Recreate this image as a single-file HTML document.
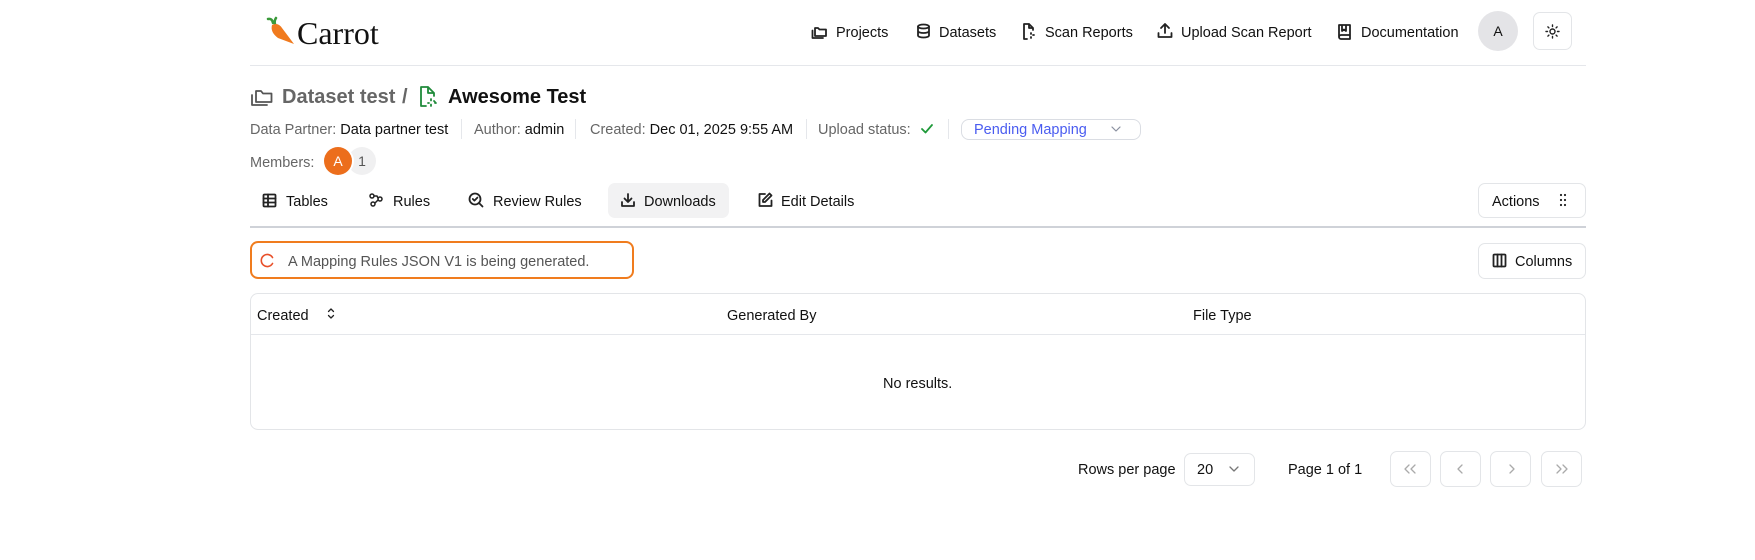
<!DOCTYPE html>
<html><head><meta charset="utf-8"><style>
*{box-sizing:border-box;margin:0;padding:0}
body{width:1755px;height:560px;background:#fff;font-family:"Liberation Sans",sans-serif;color:#111;position:relative;overflow:hidden;font-size:14.5px}
.a{position:absolute;white-space:nowrap;margin-top:2px}
.b{margin-top:0}
svg{position:absolute;fill:none;stroke:#222;stroke-width:1.8;stroke-linecap:round;stroke-linejoin:round}
.btn{position:absolute;border:1px solid #e3e5e8;border-radius:7px;background:#fff}
.g{color:#666}
.sep{position:absolute;width:1px;height:20px;background:#e5e7eb;top:119px}
</style></head><body>
<!-- logo -->
<svg style="left:264px;top:16px" width="32" height="30" viewBox="0 0 32 30"><path d="M4 3 Q8 2 9 7" stroke="#3a9a3a" stroke-width="2.5"/><path d="M12 2 Q10 5 11 8" stroke="#3a9a3a" stroke-width="2.5"/><path d="M8 9 Q14 6 18 12 L30 28 L14 22 Q6 16 8 9Z" fill="#f07a1e" stroke="none"/></svg>
<div class="a" style="left:297px;top:13px;font-family:'Liberation Serif',serif;font-size:32px;color:#111">Carrot</div>
<!-- nav -->
<svg style="left:811px;top:24px" width="16" height="15" viewBox="0 0 16 15"><path d="M4 4h3l1.5 1.5H15V12H4Z"/><path d="M1.5 6.5V14H12"/></svg>
<div class="a" style="left:836px;top:23px">Projects</div>
<svg style="left:916px;top:23px" width="15" height="16" viewBox="0 0 15 16"><ellipse cx="7.5" cy="3.5" rx="5.5" ry="2"/><path d="M2 3.5v9c0 1.1 2.5 2 5.5 2s5.5-.9 5.5-2v-9M2 8c0 1.1 2.5 2 5.5 2s5.5-.9 5.5-2"/></svg>
<div class="a" style="left:939px;top:23px">Datasets</div>
<svg style="left:1021px;top:23px" width="15" height="17" viewBox="0 0 15 17"><path d="M8 1H3v15h3M8 1l4 4v2M8 1v4h4" /><path d="M10 10v1M10 14v1M13 12h-1" stroke-dasharray="1 2"/></svg>
<div class="a" style="left:1045px;top:23px">Scan Reports</div>
<svg style="left:1157px;top:22px" width="16" height="17" viewBox="0 0 16 17"><path d="M8 11V2M4 6l4-4 4 4M1.5 11v4h13v-4"/></svg>
<div class="a" style="left:1181px;top:23px">Upload Scan Report</div>
<svg style="left:1337px;top:23px" width="15" height="17" viewBox="0 0 15 17"><path d="M2 14V2h11v14H4a2 2 0 0 1-2-2 2 2 0 0 1 2-2h9M5 2v6l2-1.5L9 8V2"/></svg>
<div class="a" style="left:1361px;top:23px">Documentation</div>
<div class="a b" style="left:1478px;top:11px;width:40px;height:40px;border-radius:50%;background:#e4e4e7;text-align:center;line-height:40px;font-size:14px">A</div>
<div class="btn" style="left:1533px;top:12px;width:39px;height:38px"></div>
<svg style="left:1545px;top:24px;stroke-width:1.4" width="15" height="15" viewBox="0 0 15 15"><circle cx="7.5" cy="7.5" r="2.5"/><path d="M7.5 1v1.5M7.5 12.5V14M1 7.5h1.5M12.5 7.5H14M2.9 2.9l1 1M11.1 11.1l1 1M2.9 12.1l1-1M11.1 3.9l1-1"/></svg>
<div class="a b" style="left:250px;top:65px;width:1336px;height:1px;background:#e5e7eb"></div>
<!-- title -->
<svg style="left:250px;top:86px;stroke:#555" width="23" height="21" viewBox="0 0 23 21"><path d="M6 5h5l2 2.5h8.5V16H6Z"/><path d="M2 9v10h15"/></svg>
<div class="a" style="left:282px;top:84px;font-size:20px;font-weight:bold;color:#666">Dataset test</div>
<div class="a" style="left:402px;top:84px;font-size:20px;font-weight:bold;color:#666">/</div>
<svg style="left:417px;top:85px;stroke:#1f8a3a" width="22" height="23" viewBox="0 0 22 23"><path d="M11 2H4v19h5M11 2l6 6v3M11 2v6h6"/><path d="M14 14v1.5M14 19.5V21M17 16l1 1M12 18h-1M19 18h-1" /></svg>
<div class="a" style="left:448px;top:84px;font-size:20px;font-weight:bold">Awesome Test</div>
<!-- meta -->
<div class="a" style="left:250px;top:120px"><span class="g">Data Partner:</span> Data partner test</div>
<div class="sep" style="left:461px"></div>
<div class="a" style="left:474px;top:120px"><span class="g">Author:</span> admin</div>
<div class="sep" style="left:575px"></div>
<div class="a" style="left:590px;top:120px"><span class="g">Created:</span> Dec 01, 2025 9:55 AM</div>
<div class="sep" style="left:806px"></div>
<div class="a g" style="left:818px;top:120px">Upload status:</div>
<svg style="left:920px;top:123px;stroke:#1f9a3a" width="14" height="12" viewBox="0 0 14 12"><path d="M2 6l3.5 3.5L12 2"/></svg>
<div class="sep" style="left:948px"></div>
<div class="a b" style="left:961px;top:119px;width:180px;height:21px;border:1px solid #dadde3;border-radius:8px;color:#4a5cf0;padding-left:12px;line-height:20px">Pending Mapping</div>
<svg style="left:1111px;top:126px;stroke:#8a90a0;stroke-width:1.2" width="10" height="7" viewBox="0 0 10 7"><path d="M1 1l4 4 4-4"/></svg>
<!-- members -->
<div class="a g" style="left:250px;top:153px">Members:</div>
<div class="a b" style="left:348px;top:147px;width:28px;height:28px;border-radius:50%;background:#f0f0f1;color:#555;text-align:center;line-height:28px;font-size:14px">1</div>
<div class="a b" style="left:324px;top:147px;width:28px;height:28px;border-radius:50%;background:#ec6e1c;color:#fff;text-align:center;line-height:28px;font-size:14px;box-shadow:2px 0 0 #fff">A</div>
<!-- tabs -->
<div class="a b" style="left:608px;top:183px;width:121px;height:35px;background:#f2f2f3;border-radius:7px"></div>
<svg style="left:262px;top:193px" width="15" height="15" viewBox="0 0 15 15"><rect x="1.5" y="1.5" width="12" height="12" rx="1"/><path d="M1.5 5.5h12M1.5 9.5h12M6 1.5v12"/></svg>
<div class="a" style="left:286px;top:192px">Tables</div>
<svg style="left:368px;top:192px;stroke-width:1.5" width="16" height="16" viewBox="0 0 16 16"><circle cx="4" cy="4" r="2"/><circle cx="12" cy="7" r="2"/><circle cx="5" cy="12" r="2"/><path d="M6 4h3l1 2M10 8l-3 3"/></svg>
<div class="a" style="left:393px;top:192px">Rules</div>
<svg style="left:468px;top:192px" width="16" height="16" viewBox="0 0 16 16"><circle cx="7" cy="7" r="5.5"/><path d="M11 11l3.5 3.5M4.8 7l1.6 1.6L9.4 5.6"/></svg>
<div class="a" style="left:493px;top:192px">Review Rules</div>
<svg style="left:620px;top:192px" width="16" height="16" viewBox="0 0 16 16"><path d="M8 2v8M4.5 6.5 8 10l3.5-3.5M2 10v4h12v-4"/></svg>
<div class="a" style="left:644px;top:192px">Downloads</div>
<svg style="left:757px;top:192px" width="16" height="16" viewBox="0 0 16 16"><path d="M8 2H2.5v12h12V8.5"/><path d="M12.5 1.5l2 2L8 10H6V8Z"/></svg>
<div class="a" style="left:781px;top:192px">Edit Details</div>
<div class="btn" style="left:1478px;top:183px;width:108px;height:35px"></div>
<div class="a" style="left:1492px;top:192px">Actions</div>
<svg style="left:1559px;top:193px;stroke-width:2.2" width="8" height="14" viewBox="0 0 8 14"><path d="M2 2h0M6 2h0M2 7h0M6 7h0M2 12h0M6 12h0"/></svg>
<div class="a b" style="left:250px;top:226px;width:1336px;height:2px;background:#cfd2d8"></div>
<!-- alert -->
<div class="a b" style="left:250px;top:241px;width:384px;height:38px;border:2px solid #f07c1e;border-radius:8px"></div>
<svg style="left:260px;top:253px;stroke:#e8502a;stroke-width:1.6" width="15" height="15" viewBox="0 0 15 15"><path d="M12.5 4.5A6 6 0 1 0 12.5 10.5"/></svg>
<div class="a" style="left:288px;top:252px;color:#555">A Mapping Rules JSON V1 is being generated.</div>
<div class="btn" style="left:1478px;top:243px;width:108px;height:36px"></div>
<svg style="left:1492px;top:253px" width="15" height="15" viewBox="0 0 15 15"><rect x="1.5" y="1.5" width="12" height="12" rx="1"/><path d="M5.5 1.5v12M9.5 1.5v12"/></svg>
<div class="a" style="left:1515px;top:252px">Columns</div>
<!-- table -->
<div class="a b" style="left:250px;top:293px;width:1336px;height:137px;border:1px solid #e3e5e8;border-radius:8px"></div>
<div class="a b" style="left:251px;top:334px;width:1334px;height:1px;background:#e5e7eb"></div>
<div class="a" style="left:257px;top:306px">Created</div>
<svg style="left:326px;top:307px;stroke-width:1.3" width="10" height="13" viewBox="0 0 10 13"><path d="M2.5 4.5 5 2l2.5 2.5M2.5 8.5 5 11l2.5-2.5"/></svg>
<div class="a" style="left:727px;top:306px">Generated By</div>
<div class="a" style="left:1193px;top:306px">File Type</div>
<div class="a" style="left:883px;top:374px">No results.</div>
<!-- pagination -->
<div class="a" style="left:1078px;top:460px">Rows per page</div>
<div class="btn" style="left:1184px;top:453px;width:71px;height:33px"></div>
<div class="a" style="left:1197px;top:460px">20</div>
<svg style="left:1229px;top:466px;stroke:#777;stroke-width:1.3" width="10" height="7" viewBox="0 0 10 7"><path d="M1 1l4 4 4-4"/></svg>
<div class="a" style="left:1288px;top:460px">Page 1 of 1</div>
<div class="btn" style="left:1390px;top:451px;width:41px;height:36px"></div>
<div class="btn" style="left:1440px;top:451px;width:41px;height:36px"></div>
<div class="btn" style="left:1490px;top:451px;width:41px;height:36px"></div>
<div class="btn" style="left:1541px;top:451px;width:41px;height:36px"></div>
<svg style="left:1403px;top:463px;stroke:#aaa;stroke-width:1.3" width="14" height="12" viewBox="0 0 14 12"><path d="M6 2 2 6l4 4M12 2 8 6l4 4"/></svg>
<svg style="left:1456px;top:463px;stroke:#aaa;stroke-width:1.3" width="10" height="12" viewBox="0 0 10 12"><path d="M6 2 2 6l4 4"/></svg>
<svg style="left:1507px;top:463px;stroke:#aaa;stroke-width:1.3" width="10" height="12" viewBox="0 0 10 12"><path d="M3 2l4 4-4 4"/></svg>
<svg style="left:1555px;top:463px;stroke:#aaa;stroke-width:1.3" width="14" height="12" viewBox="0 0 14 12"><path d="M2 2l4 4-4 4M8 2l4 4-4 4"/></svg>
</body></html>
